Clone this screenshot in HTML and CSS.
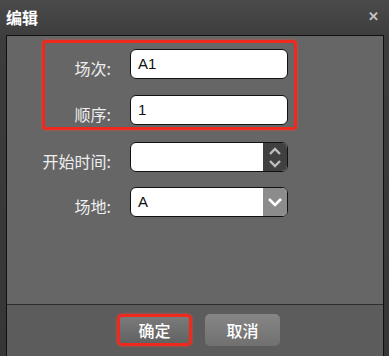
FILE: index.html
```html
<!DOCTYPE html>
<html lang="zh-CN">
<head>
  <meta charset="UTF-8">
  <title>编辑</title>
  <link rel="stylesheet" href="styles.css">
</head>
<body>
  <div class="dialog">
    <div class="titlebar">
      <span class="title">编辑</span>
      <span class="close">&#x2715;</span>
    </div>

    <div class="panel">
      <div class="form">
        <div class="group">
          <div class="row">
            <label>场次:</label>
            <div class="field"><span class="value">A1</span></div>
          </div>
          <div class="row">
            <label>顺序:</label>
            <div class="field"><span class="value">1</span></div>
          </div>
        </div>

        <div class="row outer first">
          <label>开始时间:</label>
          <div class="field">
            <span class="value"></span>
            <span class="spin">
              <svg width="14" height="10" viewBox="0 0 14 10"><path d="M2 8 L7 3 L12 8" fill="none" stroke="#bdbdbd" stroke-width="2.4"/></svg>
              <svg width="14" height="10" viewBox="0 0 14 10"><path d="M2 2 L7 7 L12 2" fill="none" stroke="#bdbdbd" stroke-width="2.4"/></svg>
            </span>
          </div>
        </div>

        <div class="row outer">
          <label>场地:</label>
          <div class="field">
            <span class="value">A</span>
            <span class="arrow">
              <svg width="16" height="10" viewBox="0 0 16 10"><path d="M2 2 L8 8 L14 2" fill="none" stroke="#fff" stroke-width="2.6"/></svg>
            </span>
          </div>
        </div>
      </div>

      <div class="footer">
        <button class="btn ok">确定</button>
        <button class="btn cancel">取消</button>
      </div>
    </div>
  </div>
</body>
</html>
```

FILE: styles.css
```css
body {
  margin: 0;
  font-family: "Liberation Sans", "Noto Sans CJK SC", sans-serif;
  background: #3a3a3a;
}

.dialog {
  width: 389px;
  height: 356px;
  box-sizing: border-box;
  padding: 0 5px 0 6px;
  display: flex;
  flex-direction: column;
  background: linear-gradient(#4a4a4a, #3c3c3c 40px, #363636);
}

.titlebar {
  height: 35px;
  display: flex;
  align-items: center;
  justify-content: space-between;
}

.title {
  color: #fff;
  font-size: 16px;
  font-weight: bold;
  margin-top: -2px;
}

.close {
  color: #c4c4c4;
  font-size: 13px;
  font-weight: bold;
  margin-right: 5px;
  margin-top: -2px;
}

.panel {
  flex: 1;
  display: flex;
  flex-direction: column;
  border: 1px solid #111;
  border-bottom: 0;
  background: #666;
}

.form {
  flex: 1;
  padding: 4px 0 0 35px;
}

.group {
  width: 249px;
  border: 3px solid #ee2a1e;
  border-radius: 4px;
  padding: 6px 0 2px;
  box-shadow: 0 0 2px #ff4a3a;
}

.row {
  display: flex;
  align-items: center;
  gap: 17px;
  height: 30px;
}

.group .row + .row {
  margin-top: 16px;
}

.row label {
  width: 66px;
  padding-right: 2px;
  flex-shrink: 0;
  white-space: nowrap;
  text-align: right;
  color: #eee;
  font-family: "Noto Sans CJK SC", sans-serif;
  font-size: 16px;
  line-height: 20px;
  padding-top: 8px;
}

.row.outer {
  margin-top: 15px;
}

.row.outer.first {
  margin-top: 12px;
}

.row.outer label {
  width: 69px;
}

.field {
  width: 158px;
  height: 30px;
  box-sizing: border-box;
  border: 1px solid #111;
  border-radius: 6px;
  background: #fff;
  display: flex;
  overflow: hidden;
}

.value {
  flex: 1;
  padding-left: 7px;
  line-height: 28px;
  font-size: 15px;
  color: #111;
}

.spin {
  width: 24px;
  background: #404040;
  display: flex;
  flex-direction: column;
  align-items: center;
  justify-content: center;
  gap: 3px;
}

.arrow {
  width: 24px;
  background: #8c8c8c;
  display: flex;
  align-items: center;
  justify-content: center;
}

.footer {
  height: 49px;
  border-top: 1px solid #2e2e2e;
  background: #5c5c5c;
  display: flex;
  align-items: center;
  justify-content: center;
  gap: 13px;
  padding-left: 7px;
  padding-bottom: 2px;
}

.btn {
  width: 75px;
  height: 32px;
  border: 0;
  border-radius: 5px;
  color: #fff;
  font-family: "Noto Sans CJK SC", sans-serif;
  font-size: 16px;
  font-weight: 500;
  background: linear-gradient(#868686, #707070);
}

.btn.ok {
  border: 3px solid #ee2a1e;
  background: linear-gradient(#7a7a7a, #626262);
  box-shadow: 0 0 2px #ff4a3a;
}
```
